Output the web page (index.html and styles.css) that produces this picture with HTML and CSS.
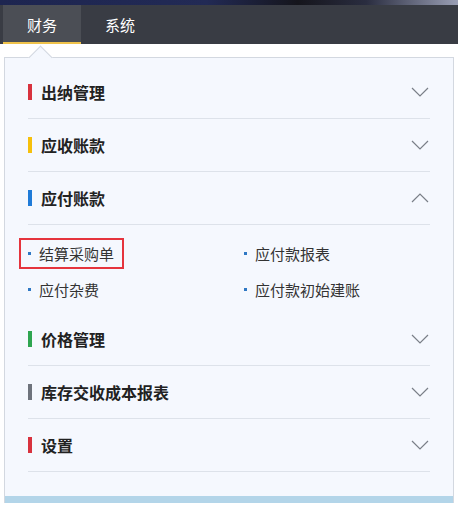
FILE: index.html
```html
<!DOCTYPE html>
<html lang="zh-CN">
<head>
    <meta charset="UTF-8">
    <meta name="viewport" content="width=device-width, initial-scale=1.0">
    <title>财务</title>
    <link rel="stylesheet" href="styles.css">
</head>
<body>

    <div class="topline"></div>

    <nav class="tabs">
        <a class="tab active" href="#">财务</a>
        <a class="tab" href="#">系统</a>
    </nav>

    <div class="panel">
        <div class="group">
            <div class="group-head">
                <span class="bar red"></span>
                <span class="group-title">出纳管理</span>
                <svg class="chevron" width="18" height="10" viewBox="0 0 18 10"><path d="M1 1 L9 9 L17 1" fill="none" stroke="#7a7f88" stroke-width="1.2"/></svg>
            </div>
        </div>

        <div class="group">
            <div class="group-head">
                <span class="bar yellow"></span>
                <span class="group-title">应收账款</span>
                <svg class="chevron" width="18" height="10" viewBox="0 0 18 10"><path d="M1 1 L9 9 L17 1" fill="none" stroke="#7a7f88" stroke-width="1.2"/></svg>
            </div>
        </div>

        <div class="group open">
            <div class="group-head">
                <span class="bar blue"></span>
                <span class="group-title">应付账款</span>
                <svg class="chevron" width="18" height="10" viewBox="0 0 18 10"><path d="M1 9 L9 1 L17 9" fill="none" stroke="#7a7f88" stroke-width="1.2"/></svg>
            </div>
            <div class="items">
                <div class="item-cell"><a class="item marked" href="#"><span class="dot"></span>结算采购单</a></div>
                <div class="item-cell"><a class="item" href="#"><span class="dot"></span>应付款报表</a></div>
                <div class="item-cell"><a class="item" href="#"><span class="dot"></span>应付杂费</a></div>
                <div class="item-cell"><a class="item" href="#"><span class="dot"></span>应付款初始建账</a></div>
            </div>
        </div>

        <div class="group">
            <div class="group-head">
                <span class="bar green"></span>
                <span class="group-title">价格管理</span>
                <svg class="chevron" width="18" height="10" viewBox="0 0 18 10"><path d="M1 1 L9 9 L17 1" fill="none" stroke="#7a7f88" stroke-width="1.2"/></svg>
            </div>
        </div>

        <div class="group">
            <div class="group-head">
                <span class="bar gray"></span>
                <span class="group-title">库存交收成本报表</span>
                <svg class="chevron" width="18" height="10" viewBox="0 0 18 10"><path d="M1 1 L9 9 L17 1" fill="none" stroke="#7a7f88" stroke-width="1.2"/></svg>
            </div>
        </div>

        <div class="group">
            <div class="group-head">
                <span class="bar red"></span>
                <span class="group-title">设置</span>
                <svg class="chevron" width="18" height="10" viewBox="0 0 18 10"><path d="M1 1 L9 9 L17 1" fill="none" stroke="#7a7f88" stroke-width="1.2"/></svg>
            </div>
        </div>

        <div class="panel-foot"></div>
    </div>

</body>
</html>
```

FILE: styles.css
```css
body {
    margin: 0;
    padding: 0;
    background-color: #fff;
    font-family: "Microsoft YaHei", "Noto Sans CJK SC", sans-serif;
}

.topline {
    height: 5px;
    background: linear-gradient(90deg, #1d2550 0%, #222a55 45%, #15151c 65%, #2a2d40 80%, #9a9fb5 100%);
}

.tabs {
    display: flex;
    height: 39px;
    padding-left: 3px;
    background-color: #393c44;
}

.tab {
    width: 78px;
    display: flex;
    align-items: center;
    justify-content: center;
    box-sizing: border-box;
    color: #fff;
    font-size: 15px;
    text-decoration: none;
}

.tab.active {
    background-color: #4b4e55;
    border-bottom: 2px solid #efc24a;
    padding-top: 2px;
}

/* panel with the little arrow under the active tab */
.panel {
    position: relative;
    margin: 13px 0 0 4px;
    width: 450px;
    box-sizing: border-box;
    border: 1px solid #d3d8e0;
    border-bottom: none;
    background-color: #f5f8fe;
    padding-top: 8px;
}

.panel::before {
    content: "";
    position: absolute;
    left: 27px;
    top: -9px;
    width: 16px;
    height: 16px;
    background-color: #f5f8fe;
    border-left: 1px solid #d3d8e0;
    border-top: 1px solid #d3d8e0;
    transform: rotate(45deg);
}

.group {
    margin: 0 23px 0 23px;
    border-bottom: 1px solid #dde2ea;
}

.group-head {
    height: 52px;
    display: flex;
    align-items: center;
}

.bar {
    width: 4px;
    height: 16px;
    margin-right: 9px;
}

.bar.red { background-color: #d8323e; }
.bar.yellow { background-color: #f6c00c; }
.bar.blue { background-color: #1f7bd8; }
.bar.green { background-color: #2ea550; }
.bar.gray { background-color: #6e737c; }

.group-title {
    flex: 1;
    font-size: 16px;
    font-weight: bold;
    color: #222;
}

.chevron {
    margin-right: 1px;
}

.group.open {
    border-bottom: none;
}

.group.open .group-head {
    border-bottom: 1px solid #dde2ea;
}

.items {
    display: grid;
    grid-template-columns: 216px 1fr;
    padding: 10px 0 6px 0;
}

.item-cell {
    height: 36px;
    display: flex;
    align-items: center;
}

.item {
    display: flex;
    align-items: center;
    font-size: 15px;
    color: #333;
    text-decoration: none;
}

.dot {
    width: 3px;
    height: 3px;
    background-color: #2f78c4;
    margin-right: 8px;
}

.item.marked {
    height: 31px;
    box-sizing: border-box;
    border: 2px solid #e5343d;
    margin-left: -9px;
    padding: 0 8px 0 7px;
}

.panel-foot {
    height: 7px;
    margin-top: 24px;
    background-color: #b3d5e9;
}
```
